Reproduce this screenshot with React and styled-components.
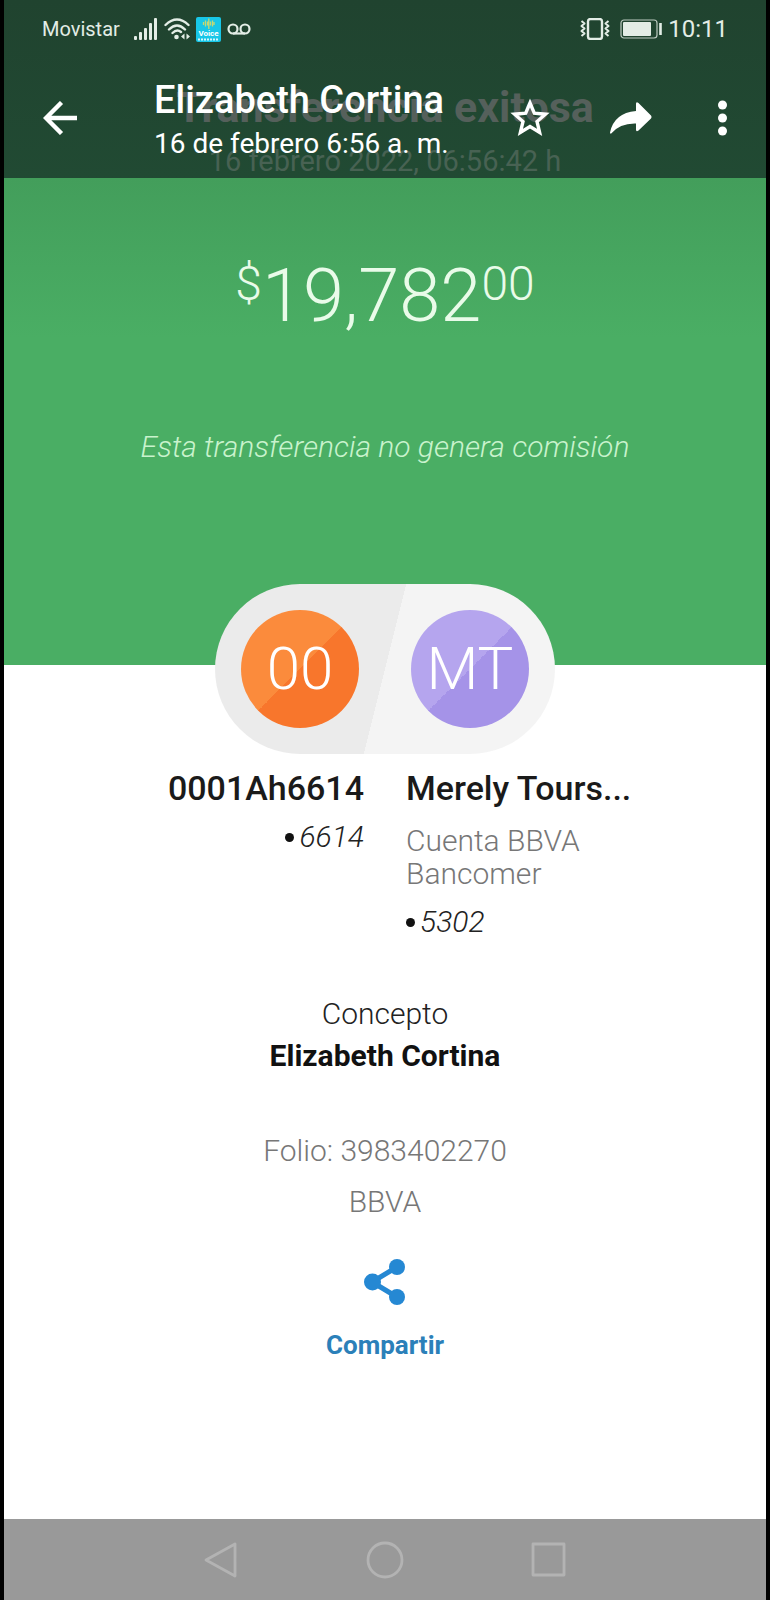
import React from 'react';
import styled, { createGlobalStyle } from 'styled-components';

const GlobalStyle = createGlobalStyle`
  * {
    box-sizing: border-box;
  }
  body {
    margin: 0;
    background-color: #000;
  }
`;

const Screen = styled.div`
  display: flex;
  flex-direction: column;
  min-height: 100vh;
  padding: 0 4px;
  background-color: #000;
  font-family: Roboto, 'Liberation Sans', sans-serif;
`;

// Viewer header: the status bar and the toolbar share one dark veil,
// the top of the receipt shows dimly through it
const Header = styled.header`
  position: relative;
  height: 178px;
  background: linear-gradient(#20432f, #214a33);
  color: #fff;
`;

const ReceiptTop = styled.div`
  position: absolute;
  inset: 84px 0 0;
  text-align: center;
`;

const ReceiptTitle = styled.h1`
  margin: 0;
  font-size: 43px;
  line-height: 46px;
  font-weight: 700;
  color: #55605b;
`;

const ReceiptDate = styled.p`
  margin: 15px 0 0;
  font-size: 29px;
  line-height: 33px;
  color: #486253;
`;

const StatusBar = styled.div`
  position: relative;
  display: flex;
  align-items: center;
  height: 58px;
  padding: 0 38px;
  color: #e3ede6;
`;

const Carrier = styled.span`
  margin-right: 14px;
  font-size: 20px;
`;

const StatusIcons = styled.div`
  display: flex;
  align-items: center;
  gap: ${({ $gap }) => $gap}px;
`;

const Clock = styled.time`
  margin-left: 6px;
  font-size: 24px;
`;

const Spacer = styled.div`
  flex: 1;
`;

const Toolbar = styled.div`
  position: relative;
  display: flex;
  align-items: center;
  height: 120px;
  padding: 0 26px 0 34px;
`;

const IconButton = styled.button`
  display: flex;
  align-items: center;
  justify-content: center;
  width: ${({ $width }) => $width || 44}px;
  height: 48px;
  padding: 0;
  border: 0;
  background: none;
  color: inherit;
  cursor: pointer;
`;

const Heading = styled.div`
  flex: 1;
  padding: 8px 0 0 72px;
`;

const Sender = styled.h2`
  margin: 0;
  font-size: 38px;
  line-height: 44px;
  font-weight: 500;
`;

const SentAt = styled.p`
  margin: 0;
  font-size: 28px;
  line-height: 44px;
`;

const Actions = styled.div`
  display: flex;
  align-items: center;
  gap: 45px;
`;

const Summary = styled.section`
  display: flex;
  flex-direction: column;
  align-items: center;
  height: 487px;
  padding-top: 78px;
  background: linear-gradient(#439e5b, #4aae64 160px);
  color: #e9fbe9;
`;

const Amount = styled.p`
  display: flex;
  align-items: flex-start;
  margin: 0;
  font-size: 74px;
  line-height: 80px;
  font-weight: 300;
`;

const Small = styled.span`
  font-size: 48px;
  line-height: 56px;
`;

const Note = styled.p`
  margin: 91px 0 0;
  font-size: 30px;
  line-height: 40px;
  font-style: italic;
  font-weight: 300;
  color: #c9f3cd;
`;

const Details = styled.main`
  display: flex;
  flex: 1;
  flex-direction: column;
  align-items: center;
  background-color: #fff;
`;

const Pill = styled.div`
  position: relative;
  display: flex;
  align-items: center;
  justify-content: space-between;
  width: 340px;
  height: 170px;
  margin-top: -81px;
  padding: 0 26px;
  border-radius: 85px;
  background: linear-gradient(104deg, #ebebeb 50%, #f4f4f4 50%);
`;

const Avatar = styled.div`
  display: flex;
  align-items: center;
  justify-content: center;
  width: 118px;
  height: 118px;
  border-radius: 50%;
  background: linear-gradient(135deg, ${({ $light }) => $light} 50%, ${({ $dark }) => $dark} 50%);
  color: #fff;
  font-size: 60px;
  line-height: 64px;
  font-weight: 300;
`;

const Accounts = styled.div`
  display: grid;
  grid-template-columns: 1fr 1fr;
  column-gap: 42px;
  width: 100%;
  margin-top: 12px;
`;

const Account = styled.div`
  text-align: ${({ $align }) => $align || 'left'};
`;

const AccountName = styled.h3`
  margin: 0;
  font-size: 34px;
  line-height: 44px;
  font-weight: 500;
  color: #1a1a1a;
`;

const AccountType = styled.p`
  width: 200px;
  margin: 14px 0 0;
  font-size: 30px;
  line-height: 33px;
  font-weight: 300;
  color: #777;
`;

const AccountNumber = styled.p`
  display: flex;
  align-items: center;
  justify-content: ${({ $align }) => $align || 'flex-start'};
  gap: 5px;
  margin: ${({ $gap }) => $gap}px 0 0;
  font-size: 30px;
  line-height: 36px;
  font-style: italic;
  font-weight: 300;
  color: #222;

  &::before {
    content: '';
    width: 9px;
    height: 9px;
    border-radius: 50%;
    background-color: #111;
  }
`;

const Concept = styled.dl`
  margin: 53px 0 0;
  text-align: center;
  font-size: 30px;
  line-height: 42px;
  font-weight: 300;
  color: #222;

  dd {
    margin: 0;
    font-weight: 700;
    color: #111;
  }
`;

const Reference = styled.div`
  margin-top: 48px;
  text-align: center;
  font-size: 30px;
  line-height: 51px;
  font-weight: 300;
  color: #777;

  p {
    margin: 0;
  }
`;

const ShareButton = styled.button`
  display: flex;
  flex-direction: column;
  align-items: center;
  gap: 22px;
  margin-top: 32px;
  padding: 0;
  border: 0;
  background: none;
  color: #2b80b9;
  font-family: inherit;
  font-size: 26px;
  line-height: 36px;
  font-weight: 700;
  cursor: pointer;
`;

const NavBar = styled.nav`
  display: flex;
  align-items: center;
  justify-content: center;
  gap: 120px;
  height: 81px;
  background-color: #999;
  color: #b3b3b3;
`;

const SignalIcon = () => (
  <svg width="24" height="22" viewBox="0 0 24 22" fill="currentColor" aria-hidden="true">
    <rect x="0" y="18" width="3" height="4" rx="1" />
    <rect x="5" y="14" width="3" height="8" rx="1" />
    <rect x="10" y="10" width="3" height="12" rx="1" />
    <rect x="15" y="5" width="3" height="17" rx="1" />
    <rect x="20" y="0" width="3" height="22" rx="1" />
  </svg>
);

const WifiIcon = () => (
  <svg width="26" height="22" viewBox="0 0 26 22" fill="none" stroke="currentColor" strokeWidth="2.4" strokeLinecap="round" aria-hidden="true">
    <path d="M1.500 7Q13-4 24.500 7M5 11.500Q13 3.500 21 11.500M8.500 15Q13 10.500 17 14" />
    <circle cx="12.500" cy="19" r="2.300" fill="currentColor" stroke="none" />
    <path d="M20.500 15.500v6l-3.500-3zM22.500 15.500v6l3.500-3z" fill="currentColor" stroke="none" />
  </svg>
);

const VoiceIcon = () => (
  <svg width="25" height="25" viewBox="0 0 25 25" aria-hidden="true">
    <rect width="25" height="25" rx="2" fill="#18c7e8" />
    <path d="M7.500 5v3M9.500 3.500v6M11.500 4.500v4M12.800 1.500v10.500M14.500 4.500v4M16.500 3.500v6M18 5v3" stroke="#c5d873" strokeWidth="1.300" />
    <text x="12.500" y="19" textAnchor="middle" fontFamily="Roboto, sans-serif" fontSize="8" fontWeight="700" fill="#fff">Voice</text>
    <path d="M2 22.500h21" stroke="#d8f8fc" strokeWidth="2" strokeDasharray="2 1" />
  </svg>
);

const VoicemailIcon = () => (
  <svg width="24" height="12" viewBox="0 0 24 12" fill="none" stroke="currentColor" strokeWidth="2.2" aria-hidden="true">
    <circle cx="6" cy="6" r="4.500" />
    <circle cx="18" cy="6" r="4.500" />
    <path d="M6 10.500h12" />
  </svg>
);

const VibrateIcon = () => (
  <svg width="30" height="22" viewBox="0 0 30 22" fill="none" stroke="currentColor" strokeWidth="2" strokeLinejoin="round" aria-hidden="true">
    <rect x="8" y="1" width="14" height="20" rx="2.500" strokeWidth="2.400" />
    <path d="M1.500 3l3 2.500-3 2.500 3 2.500-3 2.500 3 2.500-3 2.500M28.500 3l-3 2.500 3 2.500-3 2.500 3 2.500-3 2.500 3 2.500" />
  </svg>
);

const BatteryIcon = () => (
  <svg width="42" height="20" viewBox="0 0 42 20" fill="none" stroke="currentColor" aria-hidden="true">
    <rect x="1" y="1" width="36" height="18" rx="3" strokeWidth="1.200" opacity="0.8" />
    <rect x="3" y="3" width="28" height="14" rx="1" fill="currentColor" stroke="none" />
    <path d="M40.500 4v12" strokeWidth="2.600" />
  </svg>
);

const BackIcon = () => (
  <svg width="34" height="34" viewBox="0 0 34 34" fill="none" stroke="currentColor" strokeWidth="4.400" aria-hidden="true">
    <path d="M34 17H3M18.500 1.500L3 17l15.500 15.500" />
  </svg>
);

const StarIcon = () => (
  <svg width="40" height="40" viewBox="0 0 40 40" fill="none" stroke="currentColor" strokeWidth="3.400" aria-hidden="true">
    <path d="M20 5l4.300 10.200 11.200 1-8.500 7.300 2.600 10.900L20 28.600l-9.600 5.800L13 23.500l-8.500-7.300 11.200-1z" />
  </svg>
);

const ForwardIcon = () => (
  <svg width="42" height="32" viewBox="0 0 42 32" fill="currentColor" aria-hidden="true">
    <path d="M26 2Q26-1 28.500 1L41 13.500Q42 15 41 16.500L28.500 28.500Q26 30.500 26 27.500V21.500Q10 21 1.200 31.500 0 32 0 30.500 4 11 26 9z" />
  </svg>
);

const MoreIcon = () => (
  <svg width="9" height="36" viewBox="0 0 9 36" fill="currentColor" aria-hidden="true">
    <circle cx="4.500" cy="5" r="4.500" />
    <circle cx="4.500" cy="18" r="4.500" />
    <circle cx="4.500" cy="31" r="4.500" />
  </svg>
);

const ShareIcon = () => (
  <svg width="42" height="46" viewBox="0 0 42 46" fill="#2588d3" stroke="#2588d3" aria-hidden="true">
    <path d="M33 8L8 23l25 15" fill="none" strokeWidth="5" />
    <circle cx="33" cy="8" r="8" stroke="none" />
    <circle cx="8.500" cy="23" r="8.500" stroke="none" />
    <circle cx="33" cy="38" r="8" stroke="none" />
  </svg>
);

const NavIcon = ({ children }) => (
  <svg width="38" height="38" viewBox="0 0 38 38" fill="none" stroke="currentColor" strokeWidth="2.800" strokeLinejoin="round" aria-hidden="true">
    {children}
  </svg>
);

const App = () => (
  <>
    <GlobalStyle />
    <Screen>
      <Header>
        <ReceiptTop>
          <ReceiptTitle>Transferencia exitosa</ReceiptTitle>
          <ReceiptDate>16 febrero 2022, 06:56:42 h</ReceiptDate>
        </ReceiptTop>
        <StatusBar>
          <Carrier>Movistar</Carrier>
          <StatusIcons $gap={6}>
            <SignalIcon />
            <WifiIcon />
            <VoiceIcon />
            <VoicemailIcon />
          </StatusIcons>
          <Spacer />
          <StatusIcons $gap={10}>
            <VibrateIcon />
            <BatteryIcon />
          </StatusIcons>
          <Clock>10:11</Clock>
        </StatusBar>
        <Toolbar>
          <IconButton aria-label="Atrás"><BackIcon /></IconButton>
          <Heading>
            <Sender>Elizabeth Cortina</Sender>
            <SentAt>16 de febrero 6:56 a. m.</SentAt>
          </Heading>
          <Actions>
            <IconButton aria-label="Destacar" $width={56}><StarIcon /></IconButton>
            <IconButton aria-label="Reenviar" $width={56}><ForwardIcon /></IconButton>
            <IconButton aria-label="Más opciones" $width={36}><MoreIcon /></IconButton>
          </Actions>
        </Toolbar>
      </Header>

      <Summary>
        <Amount>
          <Small>$</Small>
          19,782
          <Small>00</Small>
        </Amount>
        <Note>Esta transferencia no genera comisión</Note>
      </Summary>

      <Details>
        <Pill>
          <Avatar $light="#fb8b3c" $dark="#f8762c">00</Avatar>
          <Avatar $light="#b5a5ee" $dark="#a593e8">MT</Avatar>
        </Pill>
        <Accounts>
          <Account $align="right">
            <AccountName>0001Ah6614</AccountName>
            <AccountNumber $align="flex-end" $gap={9}>6614</AccountNumber>
          </Account>
          <Account>
            <AccountName>Merely Tours...</AccountName>
            <AccountType>Cuenta BBVA Bancomer</AccountType>
            <AccountNumber $gap={14}>5302</AccountNumber>
          </Account>
        </Accounts>
        <Concept>
          <dt>Concepto</dt>
          <dd>Elizabeth Cortina</dd>
        </Concept>
        <Reference>
          <p>Folio: 3983402270</p>
          <p>BBVA</p>
        </Reference>
        <ShareButton>
          <ShareIcon />
          Compartir
        </ShareButton>
      </Details>

      <NavBar>
        <IconButton aria-label="Volver">
          <NavIcon><path d="M33 3v32L4 19z" /></NavIcon>
        </IconButton>
        <IconButton aria-label="Inicio">
          <NavIcon><circle cx="19" cy="19" r="17" /></NavIcon>
        </IconButton>
        <IconButton aria-label="Recientes">
          <NavIcon><rect x="3" y="3" width="31" height="31" /></NavIcon>
        </IconButton>
      </NavBar>
    </Screen>
  </>
);

export default App;
